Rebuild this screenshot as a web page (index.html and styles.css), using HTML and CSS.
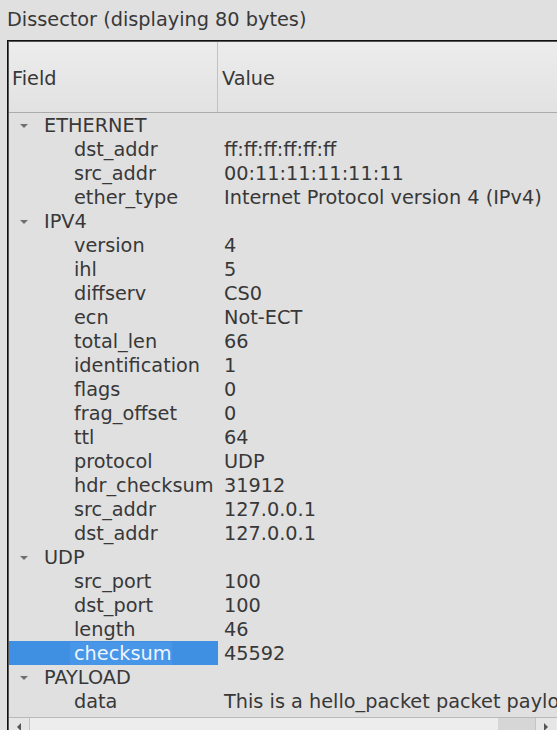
FILE: index.html
```html
<!DOCTYPE html>
<html>
<head>
<meta charset="utf-8">
<link rel="stylesheet" href="styles.css">
</head>
<body>
<div class="title">Dissector (displaying 80 bytes)</div>
<div class="frame">
  <div class="header">
    <div class="hcell hfield">Field</div>
    <div class="hcell hvalue">Value</div>
  </div>
  <div class="rows">
    <div class="row"><div class="field top"><span class="arrow"></span>ETHERNET</div><div class="value"></div></div>
    <div class="row"><div class="field child">dst_addr</div><div class="value">ff:ff:ff:ff:ff:ff</div></div>
    <div class="row"><div class="field child">src_addr</div><div class="value">00:11:11:11:11:11</div></div>
    <div class="row"><div class="field child">ether_type</div><div class="value">Internet Protocol version 4 (IPv4)</div></div>
    <div class="row"><div class="field top"><span class="arrow"></span>IPV4</div><div class="value"></div></div>
    <div class="row"><div class="field child">version</div><div class="value">4</div></div>
    <div class="row"><div class="field child">ihl</div><div class="value">5</div></div>
    <div class="row"><div class="field child">diffserv</div><div class="value">CS0</div></div>
    <div class="row"><div class="field child">ecn</div><div class="value">Not-ECT</div></div>
    <div class="row"><div class="field child">total_len</div><div class="value">66</div></div>
    <div class="row"><div class="field child">identification</div><div class="value">1</div></div>
    <div class="row"><div class="field child">flags</div><div class="value">0</div></div>
    <div class="row"><div class="field child">frag_offset</div><div class="value">0</div></div>
    <div class="row"><div class="field child">ttl</div><div class="value">64</div></div>
    <div class="row"><div class="field child">protocol</div><div class="value">UDP</div></div>
    <div class="row"><div class="field child">hdr_checksum</div><div class="value">31912</div></div>
    <div class="row"><div class="field child">src_addr</div><div class="value">127.0.0.1</div></div>
    <div class="row"><div class="field child">dst_addr</div><div class="value">127.0.0.1</div></div>
    <div class="row"><div class="field top"><span class="arrow"></span>UDP</div><div class="value"></div></div>
    <div class="row"><div class="field child">src_port</div><div class="value">100</div></div>
    <div class="row"><div class="field child">dst_port</div><div class="value">100</div></div>
    <div class="row"><div class="field child">length</div><div class="value">46</div></div>
    <div class="row selected"><div class="field child"><span class="sel-text">checksum</span></div><div class="value">45592</div></div>
    <div class="row"><div class="field top"><span class="arrow"></span>PAYLOAD</div><div class="value"></div></div>
    <div class="row"><div class="field child">data</div><div class="value">This is a hello_packet packet payload</div></div>
  </div>
  <div class="hscroll">
    <div class="sbtn left"><span class="tri-left"></span></div>
    <div class="thumb"></div>
    <div class="track"></div>
    <div class="sbtn right"><span class="tri-right"></span></div>
  </div>
</div>
</body>
</html>
```
FILE: styles.css
```css
html, body {
  margin: 0;
  padding: 0;
  background: #e0e0e0;
  overflow: hidden;
  width: 557px;
  height: 730px;
}
body {
  font-family: "DejaVu Sans", sans-serif;
  font-size: 19.3px;
  color: #383838;
}
.title {
  height: 40px;
  line-height: 39px;
  padding-left: 7px;
  white-space: nowrap;
}
.frame {
  margin-left: 7px;
  width: 600px;
  border-top: 1px solid #111;
  border-left: 1px solid #111;
  box-shadow: inset 1px 1px 0 #555;
  padding-left: 1px;
  padding-top: 1px;
}
.header {
  display: grid;
  grid-template-columns: 209px 1fr;
  height: 70px;
  border-bottom: 1px solid #ababab;
  background: linear-gradient(#ececec, #e2e2e2);
}
.hcell {
  display: flex;
  align-items: center;
  padding-left: 3px;
  padding-top: 3px;
}
.hfield {
  border-right: 1px solid #c2c2c2;
}
.hvalue {
  padding-left: 4px;
}
.rows {
  display: flex;
  flex-direction: column;
}
.row {
  display: grid;
  grid-template-columns: 209px 1fr;
  height: 24px;
  line-height: 24px;
  white-space: nowrap;
}
.field {
  display: flex;
  align-items: center;
  overflow: hidden;
  padding-top: 1px;
  height: 23px;
}
.field.top {
  padding-left: 11px;
}
.field.child {
  padding-left: 65px;
}
.arrow {
  width: 0;
  height: 0;
  border-left: 4px solid transparent;
  border-right: 4px solid transparent;
  border-top: 4px solid #707070;
  margin-right: 16px;
}
.value {
  padding-left: 6px;
  padding-top: 1px;
}
.selected .field {
  background: #3f8fe3;
  color: #eef4ff;
}
.sel-text {
  background: #4896e8;
  margin-left: -4px;
  padding-left: 4px;
}
.hscroll {
  margin-top: 4px;
  height: 14px;
  display: flex;
  border-top: 1px solid #b9b9b9;
  background: #ececec;
}
.sbtn {
  width: 20px;
  display: flex;
  align-items: flex-start;
  justify-content: center;
  padding-top: 5px;
  background: #e6e6e6;
}
.sbtn.left {
  border-right: 1px solid #c4c4c4;
}
.sbtn.right {
  width: 20px;
  border-left: 1px solid #c4c4c4;
}
.thumb {
  width: 468px;
  background: #ededed;
}
.track {
  width: 37px;
  background: #d6d6d6;
}
.tri-left {
  width: 0;
  height: 0;
  border-top: 4px solid transparent;
  border-bottom: 4px solid transparent;
  border-right: 4px solid #555;
}
.tri-right {
  width: 0;
  height: 0;
  border-top: 4px solid transparent;
  border-bottom: 4px solid transparent;
  border-left: 4px solid #555;
}
```
